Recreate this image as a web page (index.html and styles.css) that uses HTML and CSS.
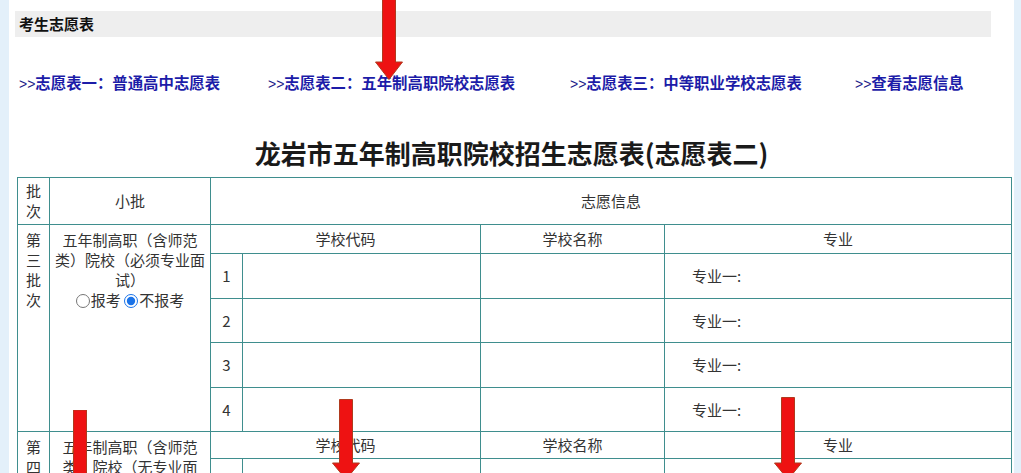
FILE: index.html
```html
<!DOCTYPE html>
<html lang="zh-CN">
<head>
<meta charset="utf-8">
<title>考生志愿表</title>
<link rel="stylesheet" href="styles.css">
</head>
<body>
<div class="page">
  <div class="bar">考生志愿表</div>
  <nav class="links">
    <a class="lk"><span class="gt">&gt;&gt;</span>志愿表一：普通高中志愿表</a>
    <a class="lk"><span class="gt">&gt;&gt;</span>志愿表二：五年制高职院校志愿表</a>
    <a class="lk"><span class="gt">&gt;&gt;</span>志愿表三：中等职业学校志愿表</a>
    <a class="lk"><span class="gt">&gt;&gt;</span>查看志愿信息</a>
  </nav>
  <h1 class="title">龙岩市五年制高职院校招生志愿表(志愿表二)</h1>
  <table class="form">
    <colgroup>
      <col class="c-batch"><col class="c-sub"><col class="c-num"><col class="c-code"><col class="c-name"><col class="c-major">
    </colgroup>
    <tr class="r-head"><td>批<br>次</td><td>小批</td><td colspan="4">志愿信息</td></tr>
    <tr class="r-sub">
      <td rowspan="5" class="batch">第<br>三<br>批<br>次</td>
      <td rowspan="5" class="sub">五年制高职（含师范类）院校（必须专业面试）<br>
        <span class="opts"><label><input type="radio" name="g3">报考</label> <label><input type="radio" name="g3" checked>不报考</label></span>
      </td>
      <td colspan="2">学校代码</td><td>学校名称</td><td>专业</td>
    </tr>
    <tr class="r-data h45"><td>1</td><td></td><td></td><td class="major">专业一:</td></tr>
    <tr class="r-data h44"><td>2</td><td></td><td></td><td class="major">专业一:</td></tr>
    <tr class="r-data h45"><td>3</td><td></td><td></td><td class="major">专业一:</td></tr>
    <tr class="r-data h44"><td>4</td><td></td><td></td><td class="major">专业一:</td></tr>
    <tr class="r-sub2">
      <td rowspan="5" class="batch">第<br>四<br>批<br>次</td>
      <td rowspan="5" class="sub">五年制高职（含师范类）院校（无专业面试）<br>
        <span class="opts"><label><input type="radio" name="g4">报考</label> <label><input type="radio" name="g4" checked>不报考</label></span>
      </td>
      <td colspan="2">学校代码</td><td>学校名称</td><td>专业</td>
    </tr>
    <tr class="r-data h45"><td>1</td><td></td><td></td><td class="major">专业一:</td></tr>
    <tr class="r-data h44"><td>2</td><td></td><td></td><td class="major">专业一:</td></tr>
    <tr class="r-data h45"><td>3</td><td></td><td></td><td class="major">专业一:</td></tr>
    <tr class="r-data h44"><td>4</td><td></td><td></td><td class="major">专业一:</td></tr>
  </table>
</div>

<svg class="arrow arrow-top" width="28" height="82" viewBox="0 0 28 82"><polygon points="7.5,0 20.5,0 20.5,64 27.5,64 14,81.5 0.5,64 7.5,64"/></svg>
<svg class="arrow arrow-left" width="28" height="100" viewBox="0 0 28 100"><polygon points="7.5,0 20.5,0 20.5,83 27.5,83 14,99.5 0.5,83 7.5,83"/></svg>
<svg class="arrow arrow-mid" width="28" height="81" viewBox="0 0 28 81"><polygon points="7.5,0.5 20.5,0.5 20.5,64 27.5,64 14,80.5 0.5,64 7.5,64"/></svg>
<svg class="arrow arrow-right" width="28" height="83" viewBox="0 0 28 83"><polygon points="7.5,0.5 20.5,0.5 20.5,66 27.5,66 14,82.5 0.5,66 7.5,66"/></svg>
</body>
</html>
```

FILE: styles.css
```css
html, body {
  margin: 0;
  padding: 0;
}
body {
  background: #e3f0fa;
  font-family: "Noto Sans CJK SC", "Microsoft YaHei", sans-serif;
  position: relative;
  height: 473px;
  overflow: hidden;
}
.page {
  margin-left: 9px;
  width: 1005px;
  min-height: 473px;
  background: #ffffff;
  padding-top: 11px;
  box-sizing: border-box;
}
.bar {
  margin-left: 6px;
  width: 976px;
  height: 26px;
  background: #eeeeee;
  box-sizing: border-box;
  padding-left: 4px;
  font-size: 15px;
  font-weight: bold;
  line-height: 26px;
  color: #111;
}
.links {
  display: grid;
  grid-template-columns: 249px 302px 285px auto;
  margin: 34px 0 0 10px;
  height: 22px;
  line-height: 22px;
  font-size: 15.4px;
}
.lk {
  color: #1c1ca8;
  font-weight: bold;
  text-decoration: none;
  white-space: nowrap;
}
.gt {
  font-weight: normal;
  color: #1c1c8a;
  font-family: "Liberation Sans", sans-serif;
  font-size: 14px;
}
.title {
  margin: 42px 0 0 0;
  text-align: center;
  font-size: 26px;
  font-weight: bold;
  line-height: 36px;
  color: #1a1a1a;
}
.form {
  margin: 6px 0 0 8px;
  width: 994px;
  border-collapse: collapse;
  table-layout: fixed;
  font-size: 15px;
  color: #333;
}
.c-batch { width: 32px; }
.c-sub { width: 161px; }
.c-num { width: 32px; }
.c-code { width: 238px; }
.c-name { width: 184px; }
.c-major { width: 347px; }
.form td {
  border: 1px solid #3f8e8e;
  text-align: center;
  vertical-align: middle;
  line-height: 20px;
  padding: 0 2px;
}
.r-head td { height: 46px; }
.r-sub td { height: 28px; }
.r-sub2 td { height: 26px; }
.h45 td { height: 44px; }
.h44 td { height: 43px; }
.form td.batch,
.form td.sub {
  vertical-align: top;
  padding-top: 5px;
}
.form td.major {
  text-align: left;
  padding-left: 27px;
}
.opts {
  display: inline-block;
  line-height: 18px;
}
.opts input {
  margin: 0 1px 0 0;
  width: 14px;
  height: 14px;
  vertical-align: -2px;
  accent-color: #1a73e8;
}
.arrow {
  position: absolute;
}
.arrow polygon {
  fill: #ee1212;
  stroke: #b03a1e;
  stroke-width: 1;
}
.arrow-top { left: 375px; top: -2px; }
.arrow-left { left: 66px; top: 410px; }
.arrow-mid { left: 332px; top: 399px; }
.arrow-right { left: 774px; top: 397px; }
```
